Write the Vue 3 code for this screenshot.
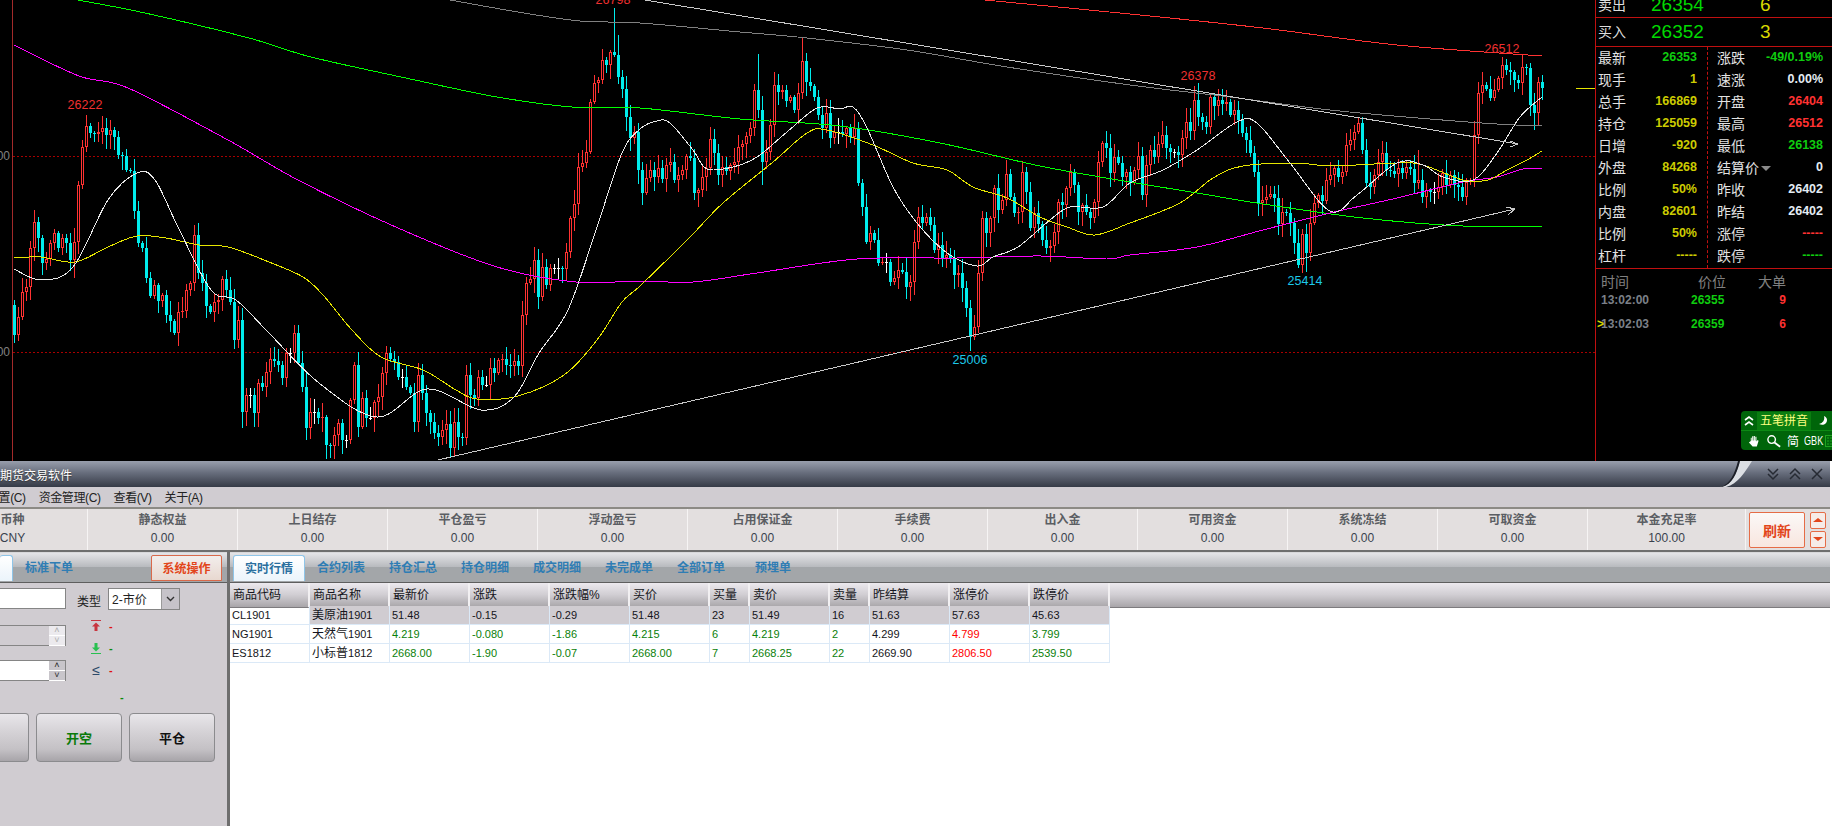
<template>
  <div class="app">
    <div class="quote">
      <svg class="chart" width="1595" height="461" viewBox="0 0 1595 461">
        <rect x="12" y="0" width="1" height="461" fill="#a32a2a" shape-rendering="crispEdges" />
        <line x1="13" y1="156.5" x2="1595" y2="156.5" class="grid-line" />
        <line x1="13" y1="352.5" x2="1595" y2="352.5" class="grid-line" />
        <rect x="1576" y="88" width="19" height="1" fill="#e6e600" shape-rendering="crispEdges" />
        <text x="10" y="160" text-anchor="end" class="axis">00</text>
        <text x="10" y="356" text-anchor="end" class="axis">00</text>

        <g shape-rendering="crispEdges">
          <path :d="candlePaths.red" fill="#ff3232" />
          <path :d="candlePaths.hole" fill="#000" />
          <path :d="candlePaths.cyan" fill="#00ecec" />
          <path :d="candlePaths.doji" fill="#fff" />
        </g>

        <g fill="none" shape-rendering="crispEdges">
          <path v-for="line in maLines" :key="line.color" :d="line.d" :stroke="line.color" />
          <path d="M645 0L1518 144M1510 141L1518 144L1510 147" stroke="#c8c8c8" />
          <path d="M438 460L1515 209M1506 207L1515 209L1508 215" stroke="#c8c8c8" />
        </g>

        <text x="85" y="109" class="peak red">26222</text>
        <text x="613" y="4" class="peak red">26798</text>
        <text x="1198" y="80" class="peak red">26378</text>
        <text x="1502" y="53" class="peak red">26512</text>
        <text x="970" y="364" class="peak blue">25006</text>
        <text x="1305" y="285" class="peak blue">25414</text>
      </svg>

      <aside class="panel">
        <div class="ask-row sell">
          <span class="ask-label">卖出</span>
          <span class="ask-price">26354</span>
          <span class="ask-size">6</span>
        </div>
        <div class="ask-row buy">
          <span class="ask-label">买入</span>
          <span class="ask-price">26352</span>
          <span class="ask-size">3</span>
        </div>
        <div class="stats">
          <div class="stat-col left">
            <div v-for="s in leftStats" :key="s[0] + s[1]" class="stat">
              <span class="stat-name">{{ s[0] }}</span>
              <b :class="s[2]">{{ s[1] }}</b>
            </div>
          </div>
          <div class="stat-col">
            <div v-for="s in rightStats" :key="s[0]" class="stat">
              <span class="stat-name">{{ s[0] }}<i v-if="s[0] === '结算价'" class="caret"></i></span>
              <b :class="s[2]">{{ s[1] }}</b>
            </div>
          </div>
        </div>
        <div class="trades">
          <div class="trade head">
            <span>时间</span>
            <span class="pad">价位</span>
            <span>大单</span>
          </div>
          <div v-for="t in trades" :key="t.time" class="trade">
            <b class="t-time"><i v-if="t.mark" class="mark">&gt;</i>{{ t.time }}</b>
            <b class="green">{{ t.price }}</b>
            <b class="red size">{{ t.size }}</b>
          </div>
        </div>

        <div class="ime">
          <div class="ime-top">
            <svg width="12" height="12" viewBox="0 0 12 12" fill="none" stroke="#fff" stroke-width="1.6"><path d="M2 5l4-3 4 3M2 10l4-3 4 3" /></svg>
            <span class="ime-name">五笔拼音</span>
            <svg width="10" height="12" viewBox="0 0 10 12"><path d="M6 1c1 4-1 7-5 8 4 2 8 0 8-4 0-2-1-3-3-4z" fill="#fff" /></svg>
            <svg width="6" height="6" viewBox="0 0 6 6" fill="none" stroke="#fff"><circle cx="3" cy="3" r="2" /></svg>
          </div>
          <div class="ime-bottom">
            <svg width="13" height="14" viewBox="0 0 14 14"><path d="M3 7V3.500h1V6.500h.5V2h1.200v4.500h.5V1.500h1.200v5h.5V2.500h1.200v5l1.300-1.500 1 .7L9.500 13H5L1 8.500l1-.8z" fill="#fff" /></svg>
            <svg width="16" height="14" viewBox="0 0 17 14" fill="none" stroke="#fff"><circle cx="6" cy="5.500" r="4" stroke-width="1.500" /><path d="M9 8.500l6 4.500" stroke-width="2" /></svg>
            <span class="ime-text">简</span>
            <span class="ime-gbk">GBK</span>
            <svg width="16" height="12" viewBox="0 0 16 12"><rect x="0.500" y="0.500" width="15" height="11" fill="none" stroke="#1fa51f" /><path d="M2 3h13M2 6h13M2 9h13" stroke="#1fa51f" stroke-dasharray="2 1" /></svg>
          </div>
        </div>
      </aside>
    </div>

    <div class="window">
      <div class="titlebar">
        <span class="title">期货交易软件</span>
        <svg class="swoosh" width="34" height="26" viewBox="0 0 34 26">
          <path d="M0 26C12 24 17 12 20 0L32 0C25 11 18 23 6 26Z" fill="#dcdfe4" />
          <path d="M0 26C10 24 15 12 18 0L20 0C17 12 12 24 2 26Z" fill="#1c1f27" />
        </svg>
        <div class="win-btns">
          <svg width="14" height="14" viewBox="0 0 14 14"><path d="M2 2l5 5 5-5M2 7l5 5 5-5" /></svg>
          <svg width="14" height="14" viewBox="0 0 14 14"><path d="M2 7l5-5 5 5M2 12l5-5 5 5" /></svg>
          <svg width="14" height="14" viewBox="0 0 14 14"><path d="M2 2l10 10M12 2L2 12" /></svg>
        </div>
      </div>

      <div class="menubar">
        <span class="first-menu">设置(C)</span>
        <span>资金管理(C)</span>
        <span>查看(V)</span>
        <span>关于(A)</span>
      </div>

      <div class="summary">
        <div v-for="(item, i) in summary" :key="item[0]" class="sum-col" :class="{ first: i === 0, last: i === summary.length - 1 }">
          <span class="sum-label">{{ item[0] }}</span>
          <span class="sum-value">{{ item[1] }}</span>
        </div>
        <button class="refresh">刷新</button>
        <div class="updown">
          <button><i class="tri up"></i></button>
          <button><i class="tri down"></i></button>
        </div>
      </div>

      <div class="panes">
        <section class="pane-left">
          <div class="tabbar">
            <span class="tab cut"></span>
            <span class="tab-link">标准下单</span>
            <span class="sys-btn">系统操作</span>
          </div>
          <div class="form">
            <div class="form-row">
              <div class="field"></div>
              <label>类型</label>
              <div class="select">
                <span>2-市价</span>
                <i class="select-btn"><svg width="9" height="6" viewBox="0 0 9 6" fill="none" stroke="#333" stroke-width="1.400"><path d="M1 1l3.500 3.500L8 1" /></svg></i>
              </div>
            </div>
            <div class="form-mid">
              <div class="inputs">
                <div class="field off"><span class="spin"><i>˄</i><i>˅</i></span></div>
                <div class="field"><span class="spin on"><i>˄</i><i>˅</i></span></div>
              </div>
              <div class="limits">
                <div class="limit">
                  <svg width="10" height="12" viewBox="0 0 10 12"><path d="M0 0h10v1H0zM5 2.500l4 4H6.500V11h-3V6.500H1z" fill="#c8353f" /></svg>
                  <em class="dash-red">-</em>
                </div>
                <div class="limit">
                  <svg width="10" height="12" viewBox="0 0 10 12"><path d="M3.500 1h3v4.500H9l-4 4-4-4h2.500zM0 11h10v1H0z" fill="#28c050" /></svg>
                  <em class="dash-green">-</em>
                </div>
                <div class="limit">
                  <span class="le">≤</span>
                  <em class="dash-red">-</em>
                </div>
              </div>
            </div>
            <em class="dash-green lone">-</em>
            <div class="actions">
              <button class="act cut-act"></button>
              <button class="act short">开空</button>
              <button class="act">平仓</button>
            </div>
          </div>
        </section>

        <section class="pane-right">
          <div class="tabbar right">
            <span class="tab active">实时行情</span>
            <span v-for="t in tabs" :key="t" class="tab-link">{{ t }}</span>
          </div>
          <div class="table">
            <div class="tr th">
              <span v-for="h in headers" :key="h">{{ h }}</span>
              <span class="filler"></span>
            </div>
            <div v-for="(row, r) in rows" :key="row.code" class="tr" :class="{ selected: r === 0 }">
              <span class="code">{{ row.code }}</span>
              <span class="name">{{ row.name }}<small>{{ row.month }}</small></span>
              <span v-for="(c, k) in row.cells" :key="k" :class="cellColor(row, k)">{{ c }}</span>
            </div>
          </div>
        </section>
      </div>
    </div>
  </div>
</template>

<script setup>
// one close per candle, first at x=14, 4px apart (values are chart y, not price)
const closes = [
  335,317,292,287,248,222,238,263,259,243,233,248,238,243,260,242,185,147,126,133,
  134,132,128,135,130,137,155,156,170,171,211,243,248,278,296,285,301,295,315,321,
  333,312,311,290,283,235,273,283,306,312,302,300,279,290,302,340,320,412,395,395,
  413,383,387,372,359,361,365,378,353,353,333,363,387,428,412,412,418,417,445,446,
  435,423,440,440,400,365,427,398,418,418,402,397,373,353,359,362,377,377,387,393,
  422,375,393,413,422,433,437,430,424,448,422,437,438,375,395,398,377,385,385,368,
  373,360,359,365,366,361,366,315,283,279,260,297,267,285,268,268,268,269,252,218,
  204,167,163,152,102,83,80,60,65,52,55,77,89,117,138,132,170,193,178,170,
  177,168,179,165,162,180,175,170,156,158,193,190,177,168,139,153,175,167,171,165,
  162,147,144,136,128,90,110,162,152,125,85,92,90,101,97,110,93,61,82,86,
  97,115,128,113,138,132,132,134,128,137,128,183,207,242,233,240,263,262,262,282,
  278,270,272,287,282,242,217,223,217,225,250,245,258,255,258,275,273,288,308,337,
  327,273,218,233,218,188,210,200,174,197,213,212,172,192,228,213,224,240,248,246,
  232,202,205,188,172,185,212,205,212,218,202,162,143,148,173,157,163,177,172,183,
  170,156,195,165,150,157,144,135,148,152,152,155,138,122,131,100,117,122,127,97,
  106,100,104,102,115,110,120,133,140,153,172,203,200,197,194,198,224,212,213,223,
  243,265,234,253,223,203,195,201,180,175,168,177,172,145,140,132,123,150,183,187,
  175,162,153,170,171,174,168,173,167,169,183,180,197,190,192,192,187,173,185,175,
  185,187,197,182,180,135,93,85,89,98,90,78,65,70,72,80,83,67,68,105,113,82,88
]

// long wicks that are visible on the chart: x -> [high y, low y]
const wicks = {
  34: [210], 74: [0, 278], 194: [225], 242: [0, 428], 326: [0, 459], 358: [352], 614: [8], 618: [35],
  758: [54], 762: [0, 185], 802: [38], 970: [0, 351], 1198: [83], 1502: [57], 1534: [0, 130], 1306: [0, 272],
  1298: [0, 268], 1418: [150], 1142: [0, 200], 1362: [117]
}

// small repeatable noise so the wicks stay the same on every run
const noise = (i, max) => {
  const v = Math.sin(i * 12.9898 + max * 78.233) * 43758.5453
  return Math.floor((v - Math.floor(v)) * max)
}

const buildCandles = () => {
  let red = ''
  let cyan = ''
  let hole = ''
  let doji = ''
  closes.forEach((close, i) => {
    const x = 14 + i * 4
    const open = i === 0 ? 305 : closes[i - 1]
    const top = Math.min(open, close)
    const bottom = Math.max(open, close)
    const fixed = wicks[x] || []
    const high = fixed[0] || top - 2 - noise(i, 13)
    const low = fixed[1] || bottom + 2 + noise(i + 50, 13)
    const wick = `M${x} ${high}h1V${low}h-1Z`
    if (open === close) {
      doji += `M${x} ${high}h1V${low}h-1ZM${x - 1} ${top}h3v1h-3Z`
    } else if (close < open) {
      red += `${wick}M${x - 1} ${top}h3V${bottom}h-3Z`
      if (bottom - top > 2) hole += `M${x} ${top + 1}h1V${bottom - 1}h-1Z`
    } else {
      cyan += `${wick}M${x - 1} ${top}h3V${bottom}h-3Z`
    }
  })
  return { red, cyan, hole, doji }
}

const candlePaths = buildCandles()

// catmull-rom through the read-off points, the averages are curves on the chart
const smooth = (flat) => {
  const pts = flat.trim().split(/\s+/).map((p) => p.split(',').map(Number))
  let d = `M${pts[0][0]} ${pts[0][1]}`
  for (let i = 0; i < pts.length - 1; i++) {
    const p0 = pts[i - 1] || pts[i]
    const p1 = pts[i]
    const p2 = pts[i + 1]
    const p3 = pts[i + 2] || p2
    const c1x = (p1[0] + (p2[0] - p0[0]) / 6).toFixed(1)
    const c1y = (p1[1] + (p2[1] - p0[1]) / 6).toFixed(1)
    const c2x = (p2[0] - (p3[0] - p1[0]) / 6).toFixed(1)
    const c2y = (p2[1] - (p3[1] - p1[1]) / 6).toFixed(1)
    d += `C${c1x} ${c1y} ${c2x} ${c2y} ${p2[0]} ${p2[1]}`
  }
  return d
}

const maLines = [
  { color: '#ff3232', points: '985,0 1140,15 1263,28 1397,45 1542,56' },
  { color: '#808080', points: '450,0 518,12 580,21 640,23 740,32 807,38 907,50 1007,67 1130,85 1230,97 1330,110 1430,119 1497,124 1542,126' },
  { color: '#00ff00', points: '78,0 145,13 249,38 311,57 415,80 497,97 572,107 640,108 740,119 840,126 940,143 1040,166 1130,182 1197,193 1263,204 1363,218 1463,226 1542,226' },
  { color: '#ff00ff', points: '14,45 79,76 128,88 228,140 298,180 398,228 497,267 576,282 640,281 693,282 757,273 857,259 957,258 1040,256 1107,259 1130,255 1197,247 1263,230 1330,213 1397,198 1463,182 1497,177 1523,169 1542,168' },
  { color: '#e6e600', points: '14,258 41,257 75,262 108,247 137,236 166,238 199,245 228,247 269,262 303,277 323,295 352,330 381,357 423,370 456,390 477,399 518,396 564,375 597,340 622,302 640,286 690,237 723,203 773,162 807,133 827,130 873,145 913,163 947,170 973,187 1007,198 1040,217 1067,227 1095,235 1130,223 1180,203 1213,178 1243,166 1297,163 1330,166 1397,163 1423,165 1463,180 1488,180 1507,170 1527,160 1542,151' },
  { color: '#e8e8e8', points: '14,269 41,280 73,267 108,200 137,173 155,180 178,227 211,290 236,300 269,333 319,383 377,417 427,389 481,410 514,397 539,353 568,310 597,227 622,153 640,129 657,121 670,123 693,150 707,169 733,167 757,157 787,132 817,108 840,109 853,107 867,128 893,187 917,223 947,253 977,266 993,257 1018,247 1050,220 1070,207 1103,207 1130,183 1163,170 1197,150 1237,122 1257,123 1290,163 1330,211 1357,195 1397,163 1423,165 1443,177 1473,180 1497,153 1520,117 1542,97' }
].map((line) => ({ color: line.color, d: smooth(line.points) }))

const leftStats = [
  ['最新', '26353', 'green'],
  ['现手', '1', 'yellow'],
  ['总手', '166869', 'yellow'],
  ['持仓', '125059', 'yellow'],
  ['日增', '-920', 'yellow'],
  ['外盘', '84268', 'yellow'],
  ['比例', '50%', 'yellow'],
  ['内盘', '82601', 'yellow'],
  ['比例', '50%', 'yellow'],
  ['杠杆', '-----', 'yellow']
]

const rightStats = [
  ['涨跌', '-49/0.19%', 'green'],
  ['速涨', '0.00%', 'white'],
  ['开盘', '26404', 'red'],
  ['最高', '26512', 'red'],
  ['最低', '26138', 'green'],
  ['结算价', '0', 'white'],
  ['昨收', '26402', 'white'],
  ['昨结', '26402', 'white'],
  ['涨停', '-----', 'red'],
  ['跌停', '-----', 'green']
]

const trades = [
  { time: '13:02:00', price: '26355', size: '9' },
  { time: '13:02:03', price: '26359', size: '6', mark: true }
]

const summary = [
  ['币种', 'CNY'],
  ['静态权益', '0.00'],
  ['上日结存', '0.00'],
  ['平仓盈亏', '0.00'],
  ['浮动盈亏', '0.00'],
  ['占用保证金', '0.00'],
  ['手续费', '0.00'],
  ['出入金', '0.00'],
  ['可用资金', '0.00'],
  ['系统冻结', '0.00'],
  ['可取资金', '0.00'],
  ['本金充足率', '100.00']
]

const tabs = ['合约列表', '持仓汇总', '持仓明细', '成交明细', '未完成单', '全部订单', '预埋单']

const headers = ['商品代码', '商品名称', '最新价', '涨跌', '涨跌幅%', '买价', '买量', '卖价', '卖量', '昨结算', '涨停价', '跌停价']

const rows = [
  { code: 'CL1901', name: '美原油', month: '1901', cells: ['51.48', '-0.15', '-0.29', '51.48', '23', '51.49', '16', '51.63', '57.63', '45.63'], plain: true },
  { code: 'NG1901', name: '天然气', month: '1901', cells: ['4.219', '-0.080', '-1.86', '4.215', '6', '4.219', '2', '4.299', '4.799', '3.799'] },
  { code: 'ES1812', name: '小标普', month: '1812', cells: ['2668.00', '-1.90', '-0.07', '2668.00', '7', '2668.25', '22', '2669.90', '2806.50', '2539.50'] }
]

const cellColor = (row, k) => {
  if (row.plain || k === 7) return ''
  return k === 8 ? 'up' : 'down'
}
</script>

<style scoped>
.app {
  width: 1832px;
  height: 826px;
  overflow: hidden;
  display: flex;
  flex-direction: column;
  background: #fff;
  font-family: "Liberation Sans", "Noto Sans CJK SC", sans-serif;
}

.quote {
  height: 461px;
  display: flex;
  background: #000;
  flex: none;
}
.chart {
  display: block;
  flex: none;
}
.grid-line {
  stroke: #a80000;
  stroke-dasharray: 2 2;
}
.axis {
  fill: #808080;
  font-size: 12px;
}
.peak {
  font-size: 12.5px;
  text-anchor: middle;
}
.peak.red {
  fill: #f03030;
}
.peak.blue {
  fill: #1cc8e8;
}

.panel {
  position: relative;
  width: 237px;
  overflow: hidden;
  border-left: 1px solid #c01010;
  box-sizing: border-box;
  color: #ddd;
}
.ask-row {
  display: flex;
  overflow: hidden;
  border-bottom: 1px solid #c01010;
  padding-left: 2px;
}
.sell {
  height: 17px;
  align-items: flex-end;
}
.buy {
  height: 28px;
  align-items: center;
}
.ask-label {
  width: 53px;
  flex: none;
  font-size: 14px;
  line-height: 24px;
}
.ask-price {
  width: 109px;
  flex: none;
  font-size: 19px;
  line-height: 24px;
  color: #00d800;
}
.ask-size {
  font-size: 19px;
  line-height: 24px;
  color: #d8d800;
}
.stats {
  display: flex;
  height: 221px;
  border-bottom: 1px solid #c01010;
}
.stat-col {
  width: 120px;
  padding: 0 5px 0 9px;
  box-sizing: border-box;
}
.stat-col.left {
  width: 112px;
  padding: 0 10px 0 2px;
  border-right: 1px dashed #c01010;
}
.stat {
  height: 22px;
  box-sizing: border-box;
  padding-bottom: 2px;
  display: flex;
  align-items: center;
  justify-content: space-between;
}
.stat-name {
  font-size: 14px;
  color: #e2e2e2;
  display: flex;
  align-items: center;
}
.stat b {
  font-size: 12.5px;
}
.caret {
  width: 0;
  height: 0;
  margin: 3px 0 0 2px;
  border-left: 5px solid transparent;
  border-right: 5px solid transparent;
  border-top: 5px solid #8a8a8a;
}
.green {
  color: #0fcc0f;
}
.yellow {
  color: #cccc00;
}
.red {
  color: #ff3232;
}
.white {
  color: #e4ecf4;
}

.trades {
  padding: 0 0 0 5px;
}
.trade {
  display: grid;
  grid-template-columns: 90px 67px 28px;
  align-items: center;
  height: 24px;
  font-size: 12px;
}
.trade.head {
  height: 23px;
  margin-bottom: -4px;
  font-size: 14px;
  color: #808080;
}
.pad {
  padding-left: 7px;
}
.t-time {
  position: relative;
  color: #7c8088;
}
.mark {
  position: absolute;
  left: -4px;
  top: 0;
  font-style: normal;
  color: #d8d800;
}
.size {
  text-align: right;
}

.ime {
  position: absolute;
  left: 145px;
  top: 411px;
  width: 110px;
  height: 39px;
  background: #00650a;
  border-radius: 4px;
}
.ime-top {
  display: flex;
  align-items: center;
  gap: 4px;
  height: 19px;
  padding-left: 2px;
  border-bottom: 1px solid #0c8a14;
}
.ime-name {
  width: 54px;
  height: 18px;
  line-height: 18px;
  margin-left: -2px;
  margin-right: 3px;
  background: #0a7d10;
  color: #ffff80;
  font-size: 12px;
  text-align: center;
}
.ime-bottom {
  display: flex;
  align-items: center;
  gap: 5px;
  height: 19px;
  padding-left: 7px;
}
.ime-text {
  font-size: 12px;
  color: #fff;
}
.ime-gbk {
  font-size: 13px;
  color: #fff;
  width: 16px;
  transform: scaleX(0.7);
  transform-origin: left center;
}

.window {
  flex: 1;
  min-height: 0;
  display: flex;
  flex-direction: column;
  margin-right: 2px;
}
.titlebar {
  position: relative;
  height: 26px;
  flex: none;
  display: flex;
  align-items: center;
  background: linear-gradient(#989eac, #686e7d 45%, #353a46);
}
.title {
  color: #fff;
  font-size: 12px;
  text-shadow: 0 1px 1px #333;
}
.swoosh {
  position: absolute;
  left: 1720px;
  top: 0;
}
.win-btns {
  margin-left: auto;
  margin-right: 6px;
  display: flex;
  gap: 8px;
}
.win-btns path {
  fill: none;
  stroke: #262a33;
  stroke-width: 1.5;
}

.menubar {
  height: 20px;
  flex: none;
  display: flex;
  align-items: center;
  gap: 13px;
  background: #d0ccd1;
  font-size: 12px;
  letter-spacing: -0.4px;
  color: #222;
  overflow: hidden;
}
.menubar span {
  margin-top: -1px;
}
.first-menu {
  margin-left: -13px;
}

.summary {
  height: 43px;
  flex: none;
  display: flex;
  align-items: center;
  box-sizing: border-box;
  border-top: 2px solid #8c8a85;
  background: #e3dfdf;
}
.sum-col {
  width: 150px;
  height: 100%;
  flex: none;
  display: flex;
  flex-direction: column;
  align-items: center;
  justify-content: center;
  gap: 3px;
  box-sizing: border-box;
  border-right: 1px solid #f6f4f4;
}
.sum-col.first {
  width: 88px;
  padding-right: 62px;
}
.sum-col.last {
  width: 158px;
  margin-right: 3px;
}
.sum-label {
  font-size: 12px;
  font-weight: bold;
  color: #5b5e63;
  line-height: 15px;
  white-space: nowrap;
}
.sum-value {
  font-size: 12px;
  color: #39424e;
  line-height: 15px;
}
.refresh {
  width: 56px;
  height: 36px;
  padding: 0;
  border: 1px solid #e56c46;
  border-radius: 2px;
  background: linear-gradient(#fbf8f7, #f8e6df);
  color: #e2451a;
  font: bold 14px "Liberation Sans", "Noto Sans CJK SC", sans-serif;
}
.updown {
  margin-left: 5px;
  display: flex;
  flex-direction: column;
  gap: 2px;
}
.updown button {
  width: 16px;
  height: 17px;
  padding: 0;
  display: flex;
  align-items: center;
  justify-content: center;
  border: 1px solid #e56c46;
  border-radius: 2px;
  background: #f6ece8;
}
.tri {
  width: 0;
  height: 0;
  border-left: 5px solid transparent;
  border-right: 5px solid transparent;
}
.tri.up {
  border-bottom: 4px solid #e2451a;
}
.tri.down {
  border-top: 4px solid #e2451a;
}

.panes {
  flex: 1;
  min-height: 0;
  display: flex;
  border-top: 2px solid #6e6e6e;
}
.pane-left {
  width: 227px;
  flex: none;
  background: #d0ccd1;
  border-right: 3px solid #6e6e6e;
}
.pane-right {
  flex: 1;
  min-width: 0;
  background: #fff;
}
.tabbar {
  height: 31px;
  box-sizing: border-box;
  display: flex;
  align-items: flex-end;
  padding-top: 4px;
  padding-bottom: 1px;
  border-top: 1px solid #d8d8da;
  border-bottom: 1px solid #5e5e5e;
  background: linear-gradient(#e4e4e7, #b8babe 48%, #a3a6a9 50%, #a3a6a9);
  font-size: 12px;
  font-weight: bold;
}
.tabbar.right {
  padding-left: 3px;
}
.tab {
  height: 26px;
  box-sizing: border-box;
  border: 1px solid #8fc5e8;
  border-bottom: none;
  border-radius: 3px 3px 0 0;
  background: linear-gradient(#fff, #ebf4fb);
  text-align: center;
  line-height: 27px;
  color: #2a6f9e;
}
.tab.cut {
  width: 13px;
  border-left: none;
}
.tab.active {
  width: 72px;
}
.tab-link {
  width: 72px;
  height: 26px;
  flex: none;
  text-align: center;
  line-height: 27px;
  color: #2f7db4;
}
.sys-btn {
  width: 71px;
  height: 26px;
  margin-left: auto;
  margin-right: 5px;
  box-sizing: border-box;
  border: 1px solid #d9694a;
  border-radius: 2px 2px 0 0;
  background: linear-gradient(#f2eeec, #e8d8d0);
  color: #e2451a;
  text-align: center;
  line-height: 27px;
}
.form {
  font-size: 12px;
  color: #222;
  padding-top: 5px;
}
.form-row {
  display: flex;
  align-items: center;
  height: 21px;
}
.form-row label {
  margin: 3px 7px 0 11px;
}
.field {
  position: relative;
  width: 66px;
  height: 21px;
  box-sizing: border-box;
  border: 1px solid #858585;
  border-left: none;
  background: #fff;
  display: flex;
  justify-content: flex-end;
}
.field.off {
  background: #d0ccd1;
}
.spin {
  width: 16px;
  display: flex;
  flex-direction: column;
  background: #eceaee;
  color: #aaa;
}
.spin.on {
  background: #c8c5ca;
  color: #222;
}
.spin i {
  flex: 1;
  font-style: normal;
  font-size: 9px;
  line-height: 9px;
  text-align: center;
  border-bottom: 1px solid #fff;
}
.select {
  width: 72px;
  height: 22px;
  box-sizing: border-box;
  border: 1px solid #858585;
  background: #fff;
  display: flex;
  align-items: center;
  justify-content: space-between;
  padding-left: 3px;
  font-size: 12px;
}
.select-btn {
  width: 17px;
  height: 100%;
  background: #c6c3c9;
  border-left: 1px solid #9a9a9a;
  display: flex;
  align-items: center;
  justify-content: center;
}
.form-mid {
  display: flex;
  margin-top: 4px;
}
.inputs {
  padding-top: 12px;
  display: flex;
  flex-direction: column;
  gap: 14px;
}
.limits {
  margin-left: 25px;
  padding-top: 2px;
}
.limit {
  height: 22px;
  display: flex;
  align-items: center;
  gap: 8px;
}
.le {
  width: 10px;
  color: #2d4a6a;
  font-size: 14px;
  text-align: center;
}
.limit em,
.lone {
  font-style: normal;
  font-size: 11px;
  font-weight: bold;
}
.dash-red {
  color: #e01010;
}
.dash-green {
  color: #0a8a0a;
}
.lone {
  display: block;
  margin: 9px 0 0 120px;
  height: 14px;
  line-height: 14px;
}
.actions {
  display: flex;
  gap: 7px;
  margin-top: 9px;
}
.act {
  width: 86px;
  height: 49px;
  flex: none;
  padding: 0;
  border: 1px solid #8b8b8e;
  border-radius: 4px;
  background: linear-gradient(#e8e6ea, #d4d1d5 40%, #c4c1c5 75%, #a7a4a9);
  font: bold 13px "Liberation Sans", "Noto Sans CJK SC", sans-serif;
  color: #111;
}
.act.cut-act {
  width: 29px;
  border-left: none;
  border-radius: 0 4px 4px 0;
}
.act.short {
  color: #0a7a0a;
}

.tr {
  display: grid;
  grid-template-columns: 80px 80px 80px 80px 80px 80px 40px 80px 40px 80px 80px 80px 1fr;
  height: 19px;
  box-sizing: border-box;
  font-size: 11px;
  color: #151520;
  line-height: 18px;
}
.tr span {
  padding-left: 2px;
  box-sizing: border-box;
  border-right: 1px solid #dbe9f7;
  border-bottom: 1px solid #dbe9f7;
  white-space: nowrap;
}
.tr.th {
  height: 23px;
  line-height: 24px;
  font-size: 12px;
}
.tr.th span {
  padding-left: 3px;
  background: linear-gradient(#ece9ee, #d0cdd2 50%, #a8a5a9);
  border-right: 2px solid #f2f0f2;
  border-bottom: 1px solid #7d7b7e;
}
.tr.th .filler {
  border-right: none;
}
.tr.selected span:not(.code) {
  background: #d0ccd1;
}
.name {
  font-size: 12px;
}
.name small {
  font-size: 11px;
}
.up {
  color: #f00;
}
.down {
  color: #0a800a;
}
</style>

<style>
html,
body {
  margin: 0;
  overflow: hidden;
  background: #fff;
}
</style>
